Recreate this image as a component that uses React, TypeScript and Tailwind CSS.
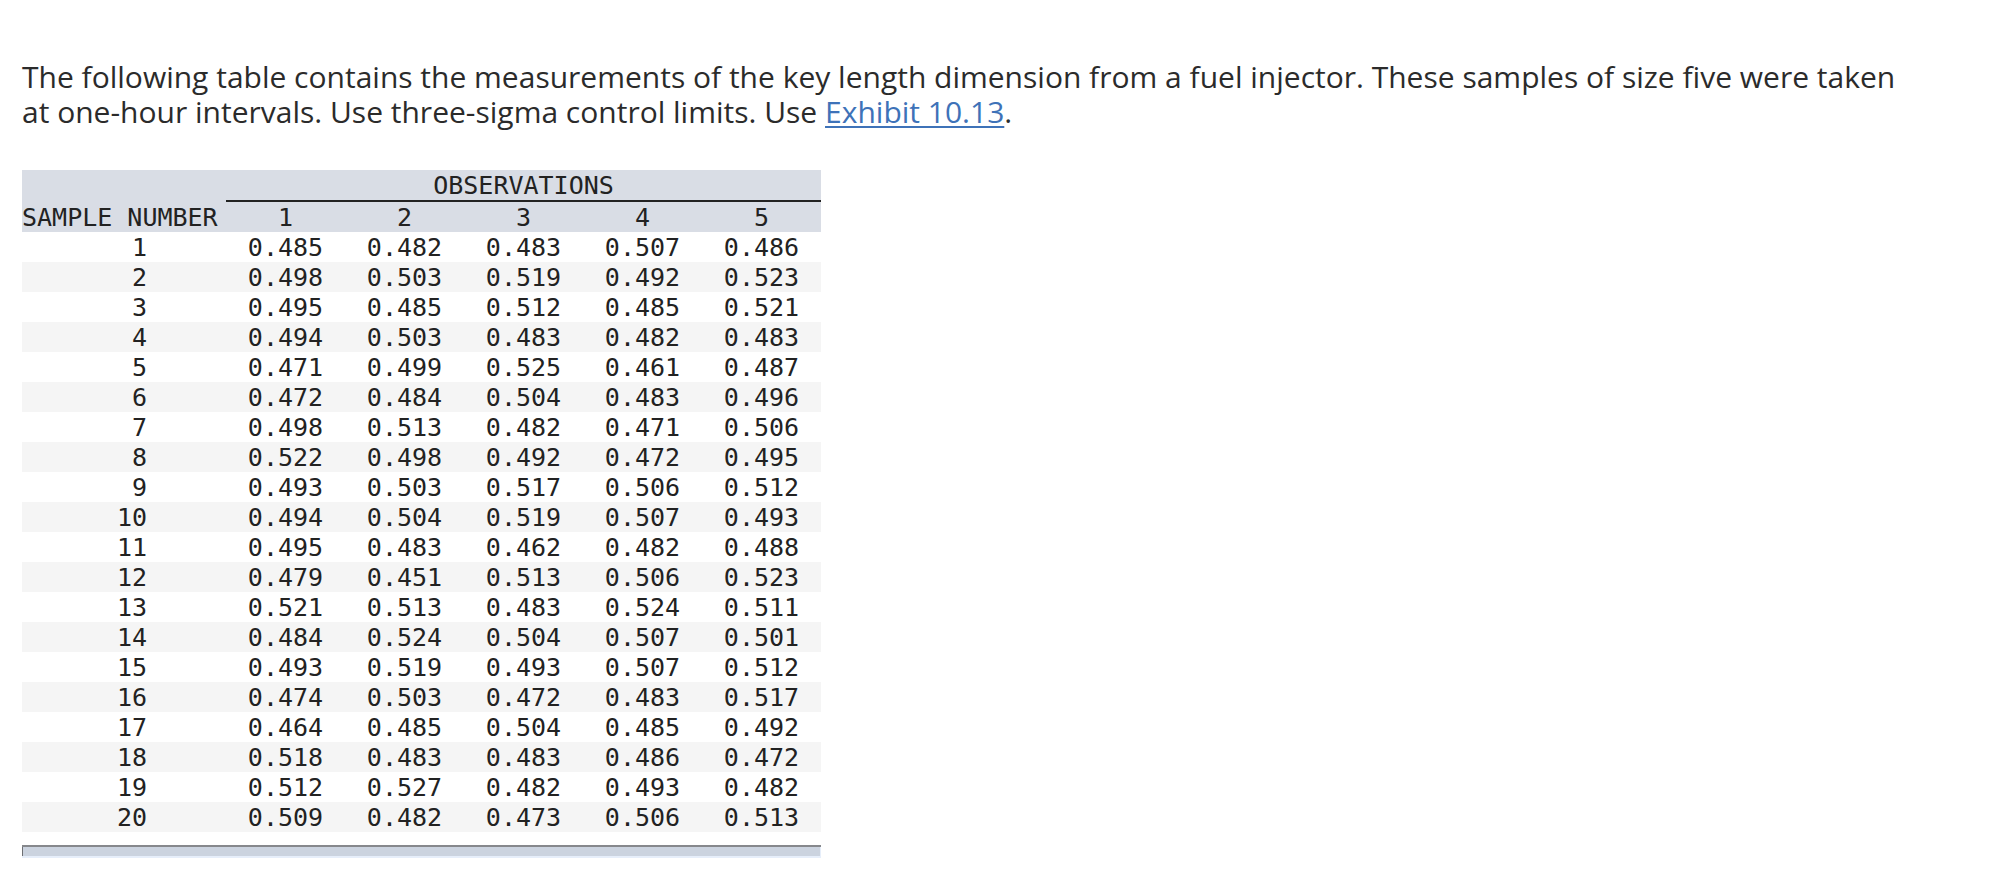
const rows: string[][] = [
  ["0.485", "0.482", "0.483", "0.507", "0.486"],
  ["0.498", "0.503", "0.519", "0.492", "0.523"],
  ["0.495", "0.485", "0.512", "0.485", "0.521"],
  ["0.494", "0.503", "0.483", "0.482", "0.483"],
  ["0.471", "0.499", "0.525", "0.461", "0.487"],
  ["0.472", "0.484", "0.504", "0.483", "0.496"],
  ["0.498", "0.513", "0.482", "0.471", "0.506"],
  ["0.522", "0.498", "0.492", "0.472", "0.495"],
  ["0.493", "0.503", "0.517", "0.506", "0.512"],
  ["0.494", "0.504", "0.519", "0.507", "0.493"],
  ["0.495", "0.483", "0.462", "0.482", "0.488"],
  ["0.479", "0.451", "0.513", "0.506", "0.523"],
  ["0.521", "0.513", "0.483", "0.524", "0.511"],
  ["0.484", "0.524", "0.504", "0.507", "0.501"],
  ["0.493", "0.519", "0.493", "0.507", "0.512"],
  ["0.474", "0.503", "0.472", "0.483", "0.517"],
  ["0.464", "0.485", "0.504", "0.485", "0.492"],
  ["0.518", "0.483", "0.483", "0.486", "0.472"],
  ["0.512", "0.527", "0.482", "0.493", "0.482"],
  ["0.509", "0.482", "0.473", "0.506", "0.513"],
];

function Scrollbar() {
  return (
    <div className="mt-[13px] w-[799px] h-[13px] flex flex-col">
      <div className="h-[2px] bg-[#86888c]" />
      <div className="flex-1 bg-[#cbd3df] border-l border-l-[#6d6f73] border-r border-r-[#e6eefa]" />
      <div className="h-[2px] bg-[#e6eefa]" />
    </div>
  );
}

export default function App() {
  return (
    <div className="min-h-screen bg-white pl-[22px] pt-[59px] text-[#2b2b2b]">
      <p className="w-[1885px] font-['Open_Sans',sans-serif] text-[30px] leading-[35px]">
        The following table contains the measurements of the key length dimension from a fuel injector. These samples of
        size five were taken at one-hour intervals. Use three-sigma control limits. Use{" "}
        <a href="#" className="text-[#3e72b8] underline underline-offset-[3px] decoration-[2px]">
          Exhibit 10.13
        </a>
        .
      </p>

      <table className="mt-[41px] border-collapse font-['DejaVu_Sans_Mono',monospace] text-[25px] text-[#222]">
        <thead className="bg-[#d9dde5]">
          <tr>
            <th className="w-[204px] p-0 font-normal" />
            <th
              colSpan={5}
              className="h-[30px] p-0 pt-[2px] leading-[28px] font-normal text-center border-b-2 border-b-[#222]"
            >
              OBSERVATIONS
            </th>
          </tr>
          <tr>
            <th className="h-[30px] p-0 pt-[2px] leading-[28px] font-normal text-left whitespace-nowrap">
              SAMPLE NUMBER
            </th>
            {[1, 2, 3, 4, 5].map((n) => (
              <th key={n} className="w-[119px] p-0 pt-[2px] leading-[28px] font-normal text-center">
                {n}
              </th>
            ))}
          </tr>
        </thead>
        <tbody>
          {rows.map((r, i) => (
            <tr key={i} className={i % 2 === 1 ? "bg-[#f5f5f5]" : "bg-white"}>
              <td className="h-[30px] p-0 pt-[2px] pr-[79px] leading-[28px] text-right">{i + 1}</td>
              {r.map((v, j) => (
                <td key={j} className="p-0 pt-[2px] leading-[28px] text-center">
                  {v}
                </td>
              ))}
            </tr>
          ))}
        </tbody>
      </table>

      <Scrollbar />
    </div>
  );
}
